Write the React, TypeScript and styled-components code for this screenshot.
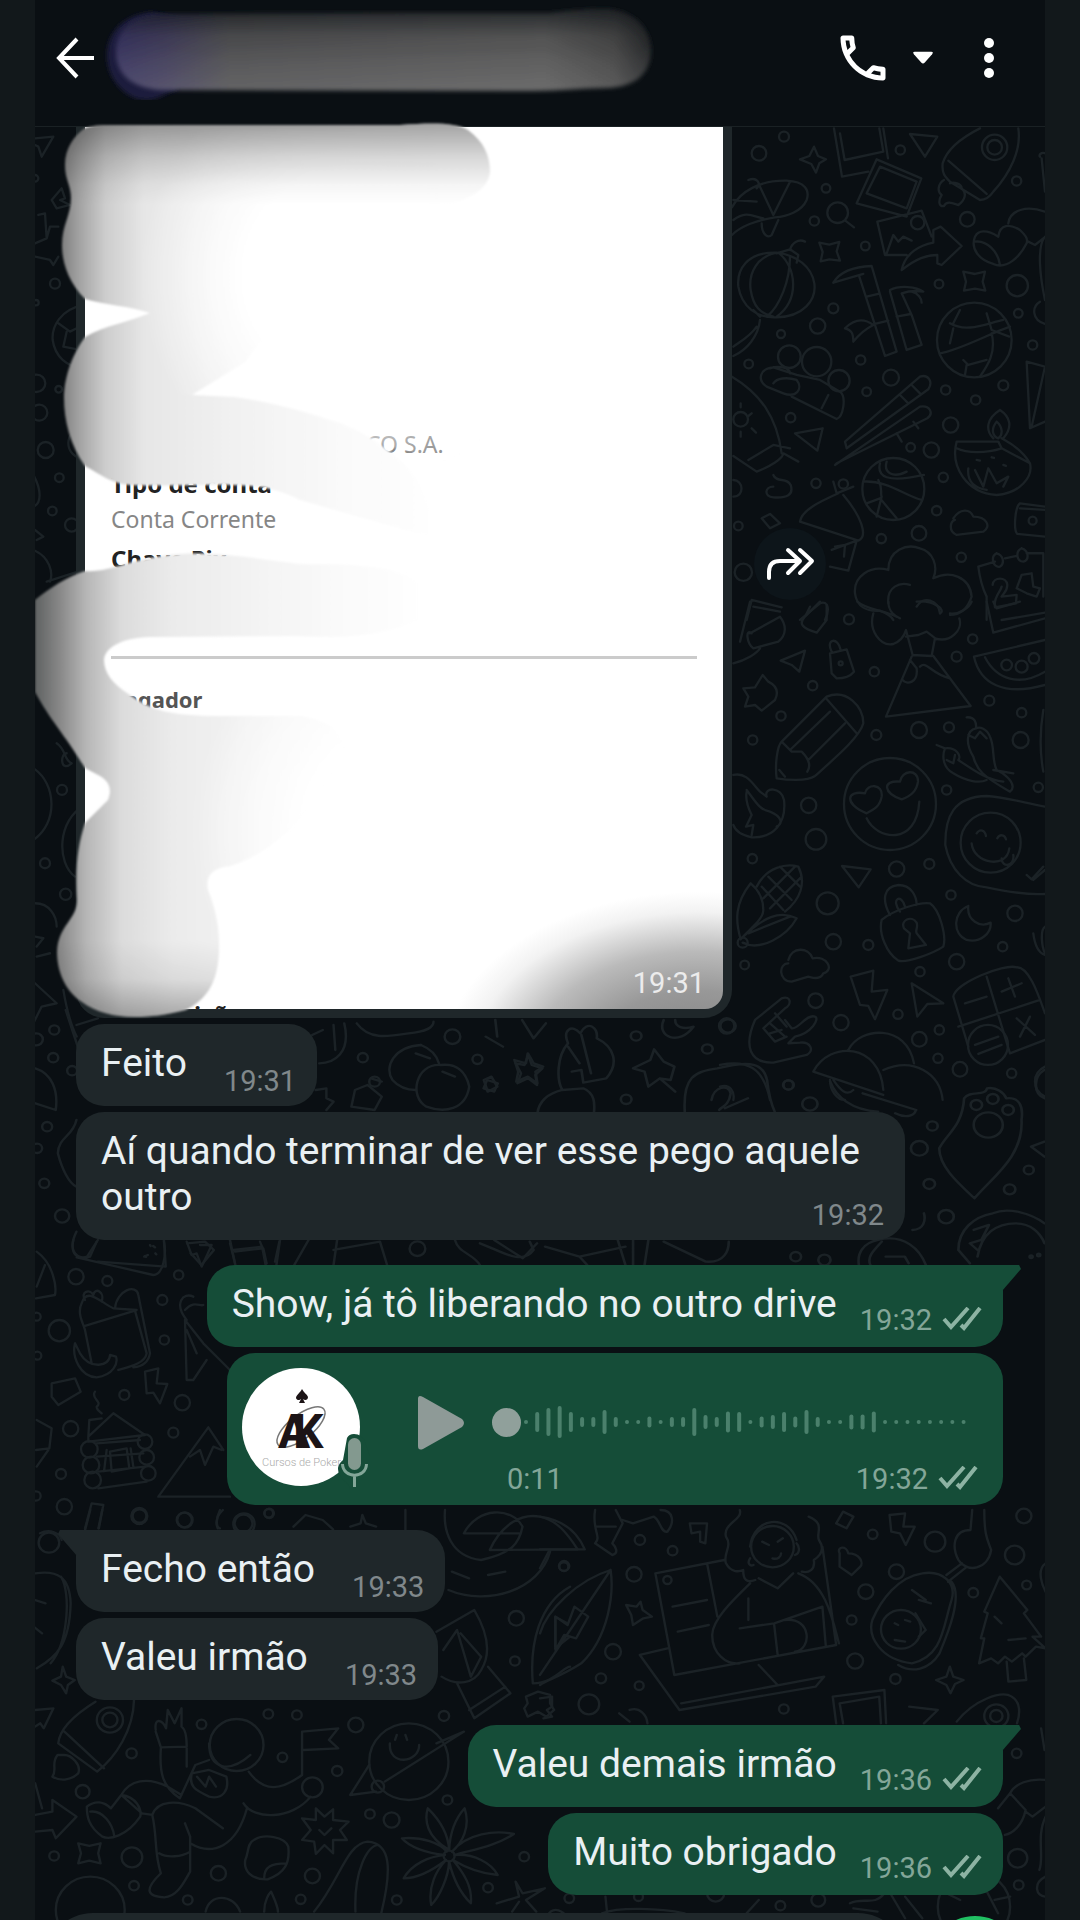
import React from 'react';
import styled, { createGlobalStyle } from 'styled-components';
import { MdOutlineCall } from 'react-icons/md';

const color = {
  frame: '#12181b',
  panel: '#0a0f13',
  incoming: '#1f272a',
  outgoing: '#154d38',
  text: '#e9f0f3',
  meta: '#80888b',
  metaOut: '#83a698',
  tick: '#8db3a3',
  doodle: '#1b2226',
};

const GlobalStyle = createGlobalStyle`
  * { box-sizing: border-box; }
  body { margin: 0; background: ${color.frame}; font-family: Roboto, "Noto Sans", sans-serif; }
  button { border: 0; padding: 0; margin: 0; background: none; color: inherit; cursor: pointer; }
`;

const Page = styled.div`
  height: 100vh;
  overflow: hidden;
  padding: 0 35px;
`;

const Panel = styled.div`
  display: flex;
  flex-direction: column;
  min-height: 100%;
  background: ${color.panel};
`;

const Header = styled.header`
  display: flex;
  align-items: center;
  height: 127px;
  padding: 0 50px 10px 20px;
  border-bottom: 1px solid #1a2124;
  color: #fff;
`;

const IconButton = styled.button<{ $gap?: number }>`
  display: flex;
  align-items: center;
  justify-content: center;
  flex: none;
  margin-left: ${(p) => p.$gap ?? 0}px;
`;

const Contact = styled.button`
  display: flex;
  flex: none;
  margin: 0 auto 0 6px;
  padding-bottom: 12px;
`;

const Chat = styled.main`
  position: relative;
  display: flex;
  flex-direction: column;
  padding: 0 42px 18px 41px;
`;

const Wallpaper = styled.svg`
  position: absolute;
  top: 0;
  left: 0;
  width: 1010px;
  height: 1793px;
  fill: none;
  stroke: ${color.doodle};
`;

const Group = styled.section<{ $mine?: boolean }>`
  position: relative;
  display: flex;
  flex-direction: column;
  align-items: ${(p) => (p.$mine ? 'flex-end' : 'flex-start')};
  gap: 6px;
  margin-bottom: 25px;
  &:last-child { margin-bottom: 0; }
`;

const Bubble = styled.article<{ $mine?: boolean; $tail?: boolean; $stacked?: boolean }>`
  position: relative;
  display: ${(p) => (p.$stacked ? 'block' : 'flex')};
  align-items: flex-end;
  gap: ${(p) => (p.$mine ? 23 : 37)}px;
  max-width: 829px;
  padding: 16px 21px 10px 25px;
  border-radius: 28px;
  ${(p) => p.$tail && (p.$mine ? 'border-top-right-radius: 0;' : 'border-top-left-radius: 0;')}
  background: ${(p) => (p.$mine ? color.outgoing : color.incoming)};
  &::after {
    content: '';
    display: ${(p) => (p.$tail ? 'block' : 'none')};
    position: absolute;
    top: 0;
    ${(p) => (p.$mine ? 'right: -18px;' : 'left: -18px;')}
    width: 19px;
    height: 26px;
    background: inherit;
    clip-path: ${(p) =>
      p.$mine ? 'polygon(0 0, 90% 0, 100% 4px, 0 100%)' : 'polygon(10% 0, 100% 0, 100% 100%, 0 4px)'};
  }
`;

const BubbleText = styled.p<{ $stacked?: boolean }>`
  display: flow-root;
  margin: 0;
  padding-bottom: ${(p) => (p.$stacked ? 0 : 10)}px;
  font-size: 39px;
  line-height: 46px;
  color: ${color.text};
`;

const Meta = styled.span<{ $mine?: boolean; $float?: boolean }>`
  display: flex;
  align-items: center;
  gap: 10px;
  flex: none;
  float: ${(p) => (p.$float ? 'right' : 'none')};
  margin-top: ${(p) => (p.$float ? 26 : 0)}px;
  padding-bottom: ${(p) => (p.$mine ? 2 : 0)}px;
  font-size: 29px;
  line-height: 30px;
  color: ${(p) => (p.$mine ? color.metaOut : color.meta)};
`;

const PhotoRow = styled.div`
  display: flex;
  align-items: center;
  gap: 22px;
`;

const PhotoBubble = styled.article`
  position: relative;
  width: 656px;
  padding: 0 9px 9px;
  border-radius: 0 0 28px 28px;
  background: ${color.incoming};
`;

const Receipt = styled.div`
  display: flex;
  flex-direction: column;
  height: 882px;
  overflow: hidden;
  padding: 302px 26px 0;
  border-radius: 0 0 18px 18px;
  background: radial-gradient(ellipse 255px 170px at 96% 106%, #7e7e7e 0%, #989898 42%, #bababa 65%, #f2f2f2 88%, #fff 100%);
  font-family: "Noto Sans", sans-serif;
  font-size: 23px;
  line-height: 30px;
`;

const Value = styled.span<{ $indent?: number }>`
  margin-left: ${(p) => p.$indent ?? 0}px;
  color: #868686;
`;

const Label = styled.span<{ $soft?: boolean; $top: number; $indent?: number }>`
  margin: ${(p) => p.$top}px 0 5px ${(p) => p.$indent ?? 0}px;
  font-size: ${(p) => (p.$soft ? 22 : 24)}px;
  font-weight: 700;
  color: ${(p) => (p.$soft ? '#555' : '#222')};
`;

const Rule = styled.hr`
  width: 100%;
  margin: 77px 0 0;
  border: 0;
  border-top: 3px solid #cbcbcb;
`;

const Smear = styled.svg`
  position: absolute;
  top: -7px;
  left: -41px;
  width: 600px;
  height: 910px;
  pointer-events: none;
`;

const PhotoTime = styled.time`
  position: absolute;
  right: 27px;
  bottom: 18px;
  font-size: 29px;
  line-height: 34px;
  color: #ececec;
`;

const ForwardButton = styled.button`
  display: flex;
  align-items: center;
  justify-content: center;
  width: 72px;
  height: 72px;
  margin-bottom: 18px;
  border-radius: 50%;
  background: #0d151a;
`;

const VoiceBubble = styled.article`
  display: flex;
  align-items: flex-start;
  width: 776px;
  height: 152px;
  padding: 15px 25px 0 15px;
  border-radius: 28px;
  background: ${color.outgoing};
`;

const PlayButton = styled.button`
  display: flex;
  margin: 26px 26px 0 46px;
`;

const Track = styled.div`
  flex: 1;
  display: flex;
  flex-direction: column;
  padding-top: 36px;
`;

const WaveBox = styled.label`
  display: grid;
  height: 36px;
  & > * { grid-area: 1 / 1; }
`;

const Seek = styled.input`
  appearance: none;
  width: 100%;
  height: 36px;
  margin: 0;
  background: transparent;
  &::-webkit-slider-thumb {
    appearance: none;
    width: 29px;
    height: 29px;
    border-radius: 50%;
    background: #90a09b;
  }
`;

const TrackFoot = styled.div`
  display: flex;
  justify-content: space-between;
  margin-top: 24px;
  padding-left: 15px;
`;

const Composer = styled.footer`
  position: relative;
  display: flex;
  align-items: flex-start;
  gap: 21px;
  padding: 0 22px 0 10px;
`;

const Field = styled.input`
  flex: 1;
  height: 96px;
  border: 0;
  border-radius: 48px;
  background: ${color.incoming};
`;

const RecordButton = styled.button`
  width: 96px;
  height: 96px;
  margin-top: 3px;
  border-radius: 50%;
  background: #21c063;
`;

type Sheet = { at: string; dots: number[][]; lines: string[] };

/* Wallpaper drawings, grouped by the area of the wall they cover. */
const sheets: Sheet[] = [
  {
    at: 'translate(720 120) scale(.3333)',
    dots: [[117,100,22],[192,50,15],[541,90,14],[318,205,13],[283,303,14],[436,378,13],[742,298,22],[890,183,14],[657,492,13],[892,497,32],[895,580,13],[340,565,15],[293,618,23],[183,642,12],[86,732,13],[422,720,14],[513,773,24],[440,815,13],[677,810,14],[767,840,14],[850,796,15],[938,675,14],[212,893,14],[692,915,23],[572,982,13],[634,990,23],[670,1072,14],[288,1090,14],[650,1172,14],[597,1240,22],[484,1256,14],[724,1312,14],[55,1218,13],[70,1357,26],[824,82,38],[824,82,22],[593,308,20],[353,278,31],[208,710,34],[290,725,44],[357,782,32],[763,660,112],[520,1107,93],[62,898,22],[938,1202,12],[370,1092,14]],
    lines: [
      'M240 118L268 108L282 80L294 108L318 118L298 130L288 158L274 132Z',
      'M342 25L366 170L445 155M360 40L374 120L490 95L478 25M490 25L504 115',
      'M470 118L604 175L560 290L410 250ZM480 140L590 185L560 265L440 220Z',
      'M570 42L652 50L615 110Z',
      'M780 25C720 55 680 90 668 130C665 160 675 170 690 185L780 240C800 240 810 230 820 215C870 160 905 90 895 25M685 122L800 222M672 180C655 190 650 215 665 225C655 240 655 262 672 258C680 240 700 250 715 255C735 240 742 220 725 205C725 190 700 185 690 190',
      'M36 262C60 215 120 180 200 182C255 185 270 210 260 240C245 275 200 290 165 292C110 300 60 320 36 345M85 180C110 170 125 190 110 205M120 200L160 285L210 185M125 310C125 345 145 355 155 345L175 300M40 240L110 245M40 300C80 270 100 290 130 295',
      'M376 302L402 322',
      'M472 305L605 272L635 350M472 305L495 405L560 405M500 400L520 345L535 365L550 350L575 362',
      'M545 450C555 400 600 375 640 368L640 330L662 320L725 378L665 435L652 430L652 405C620 405 590 415 545 450Z',
      'M765 350C775 330 800 328 835 350C840 310 870 312 900 330C915 345 925 355 920 370C900 410 860 450 820 432C780 420 750 390 765 350ZM865 310C870 270 920 255 975 275M925 365L945 375L970 355M765 365C800 360 835 395 840 435',
      'M298 368L328 374L358 366L350 394L360 422L328 418L302 424L308 396Z M730 455L765 462L795 455L788 485L796 512L765 506L732 512L738 485Z',
      'M170 398C80 395 50 450 55 500C65 560 110 595 170 592C250 590 290 540 283 490C275 440 230 405 170 398ZM170 398C110 410 85 460 92 510C100 560 120 580 160 590M175 398C230 440 240 540 170 590M210 410C210 480 180 560 140 590M170 400L210 388L235 405L230 428M210 390C215 370 235 355 255 365M100 570L120 590M120 600C115 650 80 690 40 708M110 620C90 650 60 665 40 680',
      'M340 488C360 455 400 440 455 438L530 695L495 708L418 470M340 488L430 462M440 530L475 522M465 612L505 602M510 510C540 495 590 500 610 515C580 510 560 515 545 520L575 585L605 675L560 690L510 515M530 590L572 582M575 515C595 520 605 535 605 548M375 625C410 590 440 600 460 615C440 625 420 640 400 665C400 640 395 630 375 625',
      'M690 610C740 640 800 610 850 600M700 625L690 670M800 580L815 630L868 650M660 700C720 690 810 640 870 620M720 570L700 610M730 720L745 735L800 720M815 640C830 700 800 740 780 770M740 735L735 765',
      'M160 742C120 745 110 780 140 800L190 820C230 835 250 805 230 780C200 770 170 775 160 790M160 742L230 765L300 780L360 815C380 830 370 890 350 897L215 830M325 825L305 865M150 745C180 735 210 745 210 760',
      'M375 965L600 770C625 762 640 785 625 808L380 985ZM345 1035L600 860C630 855 642 880 622 895L350 1030ZM540 825L565 850M575 795L600 820M530 940L545 965M580 905L595 925',
      'M36 770C120 820 170 890 185 1000M40 1008L110 1055C150 1040 190 1015 190 1000L235 1025M85 1020L160 975L210 985M62 850L62 862M20 900L30 902M95 880L85 888M95 925L108 938M62 935L62 950',
      'M225 940L308 925L292 992Z',
      'M840 870C800 895 795 930 820 955M840 870C870 890 880 920 850 955M830 905C810 930 820 950 835 955C850 945 848 920 830 905M710 965C690 1040 740 1120 830 1125C900 1120 940 1070 930 1030C900 980 860 965 845 955M710 965L835 965L845 985C800 1000 740 1000 710 985M845 985L930 1030M745 1045C740 1090 770 1105 800 1110M765 1050L790 1100L805 1045L830 1090L865 1070L850 1100M770 1020L780 1022M815 1012L822 1014M850 1035L858 1038',
      'M430 1085C500 1080 560 1130 605 1140M480 1030C470 1070 500 1090 612 1065M500 1025C490 1060 520 1075 560 1055M440 1150L480 1135L530 1195M485 1130L470 1190M475 1080C490 1110 480 1120 485 1130',
      'M340 1085L350 1120L400 1100M355 1120C300 1145 245 1170 240 1205L415 1262C445 1250 425 1190 370 1125M335 1290L410 1262L385 1352L330 1340M345 1280L375 1275L372 1310',
      'M160 1065C170 1090 200 1070 212 1095C222 1125 200 1135 160 1132C130 1130 135 1100 160 1100M125 1195L150 1182L180 1210L150 1225ZM40 1080C70 1080 75 1130 40 1130',
      'M700 1195C720 1165 750 1165 760 1190C800 1190 815 1220 790 1235L710 1245C685 1235 690 1205 705 1200',
      'M975 740L920 725L930 925L975 905M975 740L935 920M960 545C935 560 935 600 975 612M975 350C950 380 960 470 975 540M960 110C955 105 965 95 975 100M965 115L975 215',
      'M975 1160L900 1150C885 1160 880 1230 892 1242L975 1250M900 1165L975 1170',
      'M505 1350C505 1290 560 1270 600 1285C640 1295 655 1340 640 1375C690 1350 750 1370 755 1430C740 1475 715 1485 690 1485M505 1350C450 1335 400 1370 405 1420C410 1460 440 1475 480 1472C500 1480 515 1490 520 1500M505 1450C500 1400 540 1385 570 1395M590 1460C610 1425 655 1440 660 1480',
      'M775 1340L825 1325M855 1315L890 1308M920 1300L970 1300L970 1430M775 1340C780 1380 790 1410 800 1430L800 1500M830 1300C810 1310 820 1345 840 1340C855 1330 850 1305 830 1300M905 1285C885 1295 890 1325 910 1325C930 1320 925 1290 905 1285M818 1395C820 1370 860 1370 862 1395C862 1415 850 1420 845 1430L890 1425L888 1450L825 1462C820 1430 840 1420 845 1400M890 1405L905 1365L935 1360L940 1400L960 1405L950 1430L920 1420Z',
      'M80 1500L95 1440L185 1462M240 1500L300 1450C325 1440 330 1470 315 1500',
    ],
  },
  {
    at: 'translate(720 600) scale(.3333)',
    dots: [[387,58,15],[463,215,14],[278,257,14],[183,348,14],[98,420,14],[710,170,15],[758,117,14],[808,302,15],[905,338,14],[902,420,24],[597,390,24],[687,382,15],[469,405,15],[266,616,23],[288,718,31],[97,776,14],[510,612,138],[680,570,14],[955,562,14],[812,728,90],[530,807,23],[628,792,15],[693,885,14],[323,910,33],[885,940,23],[340,1025,23],[445,1035,15],[848,1040,14],[710,1085,23],[600,1115,14],[74,1095,13],[287,1202,22],[363,1268,23],[534,1243,14],[598,1318,22],[658,1290,14],[654,1375,14],[720,1408,22],[875,1420,14],[205,1455,14],[20,1278,23],[804,1335,60],[68,1028,15],[362,190,6],[860,195,16],[905,200,18],[942,175,16]],
    lines: [
      'M95 100C75 85 80 130 100 145L175 125C200 105 200 75 180 50L90 100M90 5L60 125M40 190C80 180 110 160 120 145M100 20L180 35',
      'M255 50L300 5M255 50C235 70 245 85 290 98L320 60L320 15M255 50L270 20',
      'M182 182L255 152L238 215L215 195Z',
      'M330 160L380 148L402 215C390 230 370 235 350 235L335 220ZM335 155C315 115 355 110 362 150',
      'M412 5C440 30 490 30 530 50M505 5C505 40 530 50 540 55M460 40C445 90 480 140 520 132C550 120 555 100 558 90L578 165L635 168L645 115C690 130 730 90 718 55M690 40C720 45 750 20 755 5M558 110L595 105L620 95L650 118M575 170L498 350L752 318L640 168M570 180L590 205C595 250 560 255 548 240M600 200C620 180 630 220 690 235M660 40C680 30 640 0 590 5',
      'M800 5L820 98L975 55M845 60L975 38M820 5L830 25L900 5',
      'M762 170L975 120M762 170C780 250 850 290 975 255M795 172C830 240 900 260 975 215',
      'M128 225L145 245C175 260 175 280 165 300L125 332L105 315L75 320L85 290L70 265L105 262Z',
      'M320 290C380 265 430 320 430 370C420 410 350 470 285 528C260 545 200 540 170 535C165 500 170 440 185 425ZM318 295L410 400M330 335L210 450M375 370L265 480M185 425L215 455L245 455C265 475 275 495 262 515M178 510L195 530',
      'M40 525C80 515 100 555 120 575L140 590C130 560 185 560 192 600C200 670 160 715 95 712C60 705 45 690 40 675M80 570C110 610 120 630 150 635C185 650 190 670 170 680M80 575C75 600 85 625 95 645L78 680L100 675L95 705',
      'M440 655C470 720 590 740 598 605M440 640C370 610 380 570 435 580C440 550 490 550 485 590C480 620 460 630 440 640M545 598C490 580 485 540 540 545C545 510 595 505 594 545C590 575 570 590 545 598',
      'M740 352C765 350 770 370 768 385C740 390 735 430 760 470C770 510 790 530 870 575C890 560 870 530 830 510C815 480 825 440 810 410C800 385 780 380 768 385M745 405L765 415L780 395L800 415M650 435L675 445C665 470 670 505 700 520C740 545 780 550 800 540M675 445C710 440 725 470 715 480C760 510 800 540 850 545M680 480L700 490L705 465M820 510L880 520',
      'M975 620C900 605 850 590 800 588C700 590 675 650 676 735C690 810 740 860 800 862C860 875 930 885 975 882M755 730C760 790 860 810 868 745M770 700C780 685 795 690 798 708M832 715C840 700 855 705 858 718M845 775C845 805 885 800 880 765M920 825L935 838L970 800M940 840L975 810M970 330C960 390 960 460 970 515',
      'M366 798L452 808L416 862Z',
      'M92 850C45 910 45 960 62 1018C85 990 130 960 130 930C130 890 110 865 92 850ZM62 1018C130 950 180 930 230 955C200 1010 120 1055 68 1028M85 1000L210 950M110 860C140 800 200 790 235 800C260 850 240 900 195 935M125 860L190 930M145 830L215 900M180 800L240 860M130 895L225 800M150 925L245 830',
      'M510 945C485 900 490 860 535 855C575 855 590 890 590 915M540 935C510 895 545 880 555 920M485 960C520 930 600 905 630 910C660 930 680 1010 670 1040C640 1060 560 1090 535 1082C500 1060 475 1000 485 960ZM552 985C540 960 575 945 590 968C595 985 585 990 590 1000L618 1035L565 1045L570 1000Z',
      'M745 918C700 935 695 1000 740 1020C780 1030 815 1000 812 968C780 985 740 960 745 918Z',
      'M205 1080C215 1040 265 1040 278 1075C320 1065 345 1110 310 1120C300 1145 270 1130 265 1130L215 1145C175 1145 175 1090 205 1090',
      'M392 1130L460 1112L455 1175L502 1170L465 1258L445 1218L420 1215Z M575 1150L670 1210L622 1212L592 1250Z',
      'M105 1260C70 1340 90 1390 160 1388L260 1365C285 1350 270 1325 240 1328L205 1330L225 1310C275 1300 300 1255 285 1250C260 1240 235 1290 215 1285L195 1260M105 1260L185 1195C215 1185 215 1215 195 1225L130 1285M150 1270L195 1310M130 1285L165 1325L200 1310M165 1240L200 1280M150 1300L185 1290',
      'M700 1190C705 1150 850 1090 890 1102C930 1100 960 1200 975 1240M700 1190L745 1340M800 1130L870 1360L975 1320M715 1280L960 1200M735 1210L800 1190M845 1175L905 1150M865 1135L885 1190M890 1255L945 1305M930 1250L900 1310M765 1335L835 1310M775 1362L845 1335',
      'M385 1350C420 1280 560 1270 582 1390M280 1415C330 1320 480 1330 490 1470M280 1415L490 1485M490 1410C580 1370 660 1420 668 1500M330 1440C330 1470 350 1500 375 1500M340 1440C360 1470 380 1490 400 1470',
      'M975 1400C935 1420 935 1470 975 1490M975 980C960 990 965 1040 975 1060M940 1000C945 1040 960 1060 975 1065',
      'M0 1395C80 1380 130 1400 150 1500M0 1460C30 1450 45 1475 40 1500',
    ],
  },
  {
    at: 'translate(480 880) scale(.3827 .3333)',
    dots: [[648,438,20],[408,468,14],[594,507,14],[806,615,14],[862,672,20],[382,658,14],[1182,738,14],[1148,805,22],[1174,912,15],[1218,1010,20],[1434,870,13],[1384,928,15],[1328,735,38],[1297,675,15],[1340,657,15],[1380,690,15],[825,1130,14],[900,1140,16],[1440,1130,4],[1460,1125,4]],
    lines: [
      'M480 420C460 470 520 500 558 440C530 450 510 440 510 420M110 420L140 475L172 430M15 470L60 500M40 420L45 470',
      'M455 508L480 545L508 560L498 600L470 595L440 620L430 575L400 565L445 540ZM470 595L510 635',
      'M90 540L120 550L125 520L140 550L165 560L145 575L150 610L125 590L95 605L100 575Z',
      'M215 630C200 600 200 530 230 490C215 450 240 430 262 460C280 420 310 440 305 475C350 500 365 550 330 595L270 608L265 570L240 575M265 465L290 580M230 500L260 550M215 630L270 625C300 640 300 670 298 695M150 700C155 660 180 640 215 630M10 600L30 590L45 620L20 635Z',
      'M535 695C530 590 560 575 620 565C710 540 740 550 750 600C755 650 760 670 770 695M605 660C610 620 650 610 655 640C650 680 630 680 625 690M640 685L700 655',
      'M915 605C930 650 970 690 1040 695M1000 640L1140 690M1085 700C1120 720 1140 700 1138 690',
      'M1265 655C1280 630 1320 650 1325 625C1350 620 1370 640 1375 655C1410 650 1420 680 1415 720C1420 830 1340 890 1292 955C1250 910 1200 860 1200 805C1220 760 1260 740 1265 655Z',
      'M1475 785L1440 800L1475 830M1475 570C1445 590 1445 640 1475 655',
      'M1250 1110C1250 1050 1290 1010 1340 1000C1380 980 1440 1000 1475 1030M1250 1110L1280 1150M1300 1130C1310 1060 1350 1030 1400 1030C1440 1030 1465 1060 1475 1090M1290 1050L1330 1035L1310 1080L1280 1090L1300 1110M1130 1050C1160 1050 1165 1020 1160 1000',
      'M0 1090C50 1110 110 1160 140 1110L130 1085M170 1100L260 1130L380 1100M260 1130L280 1155M360 1080L380 1155M400 1080L400 1155M440 1080L430 1155M480 1085L590 1145C640 1150 650 1110 650 1085M990 1155C985 1120 1000 1090 1040 1080C1110 1060 1150 1110 1165 1155M1020 1155C1010 1130 1030 1110 1050 1085M1060 1130L1110 1130L1120 1150',
    ],
  },
  {
    at: 'translate(30 1010) scale(.3571 .3333)',
    dots: [[68,60,14],[65,143,14],[18,88,18],[118,182,14],[48,350,14],[40,520,14],[90,618,20],[932,143,14],[1183,80,22],[1253,148,14],[1085,716,22],[965,215,15],[20,415,14]],
    lines: [
      'M880 40C900 130 850 160 810 160M790 75L820 60M850 45L855 120M915 40C950 90 1000 80 1060 70C1110 65 1130 50 1130 35',
      'M1095 105C1020 110 990 170 1015 210C1040 240 1070 240 1080 240M1150 165C1080 160 1060 260 1110 290C1160 310 1220 300 1230 230C1220 180 1190 160 1150 165M1095 105C1130 120 1140 140 1145 160M1080 130L1120 145M1155 185L1190 200',
      'M910 240L945 225L985 260L965 300L900 290ZM955 205L985 215M1280 210L1310 220L1300 245L1270 235Z M800 240L830 235L830 265L850 275L830 300',
      'M1360 160L1385 165L1395 135L1405 165L1435 175L1415 195L1420 225L1395 205L1365 220L1375 190Z',
      'M15 175C60 190 80 240 72 300L15 280M130 330C120 380 80 380 78 430C90 480 110 520 130 530M100 0L140 130M130 45L190 25',
      'M130 665C100 730 140 750 160 740L190 690M190 755L380 770L375 690M320 740L330 735M345 708L350 712M440 700L490 695L515 720L480 765L450 730M560 690L575 765M570 720L650 710L660 765M700 690L690 765M780 690L740 765M850 720L980 695L1000 765M860 690L850 765M1190 690C1200 730 1240 730 1260 765M1300 690L1380 745L1420 700',
    ],
  },
  {
    at: 'translate(30 1220) scale(.3333)',
    dots: [[138,170,23],[232,183,15],[397,240,15],[446,165,14],[88,332,32],[403,360,14],[283,525,15],[457,548,23],[122,626,23],[430,638,15],[93,762,15],[103,860,23],[328,888,24],[465,900,23],[718,880,14],[22,407,12],[18,828,14],[178,688,25],[183,735,25],[188,780,25],[345,665,22],[350,712,22],[355,760,22],[642,912,32],[20,290,12]],
    lines: [
      'M20 95C70 130 80 200 75 225L18 235M20 200L45 135',
      'M130 60C120 110 150 120 180 110L200 65M140 112L370 165C400 165 410 100 402 65M360 75L362 78M345 108L348 111M376 100L379 103',
      'M155 250C140 280 160 310 165 330L185 430M165 318L315 272L350 400C345 430 300 440 265 450M155 250C170 200 210 245 250 265L320 270M255 265C260 210 320 190 325 225L360 400C355 430 330 440 310 442M165 240C150 215 180 205 190 225C195 200 225 215 215 245M135 370C125 410 150 470 200 472C250 465 265 430 258 410L240 405C240 440 180 450 150 400L135 370',
      'M470 300C430 250 460 215 490 230M465 270C490 240 510 260 520 255M465 300L520 370L600 450M465 300L470 480L490 480L530 420M470 330L500 400',
      'M345 455L385 445L380 490L412 492L390 550L370 518L350 520Z',
      'M65 490L135 475L152 515L85 555L65 530Z M195 515C180 535 220 545 200 560C200 570 210 575 215 580',
      'M175 650L250 580L345 645L175 665ZM175 650L178 600L215 595M200 670L330 660M200 710L340 700M205 755L345 740M205 805L350 785M240 695L290 685L298 745L245 755Z M230 690L222 755M302 685L310 740',
      'M385 830L535 622L580 690M385 830L600 830M480 710L510 690L525 735L550 680L575 690M20 600L65 625L58 685L18 690M55 690L20 740',
      'M165 925L185 850L220 855L205 925M570 870C555 900 560 925 570 925M30 940C60 925 90 940 95 960',
      'M470 65L485 105L500 100L515 140L545 75L510 75M600 70L615 130M615 95L700 85L710 130M690 65L700 90M748 65L735 125',
    ],
  },
  {
    at: 'translate(30 1510) scale(.3444 .3333)',
    dots: [[55,98,30],[318,18,20],[448,30,22],[620,40,26],[693,10,13],[1550,170,13],[1412,325,22],[1408,453,14],[1202,618,15],[692,612,14],[775,615,14],[946,645,22],[498,643,14],[232,630,38],[232,630,22],[295,730,15],[733,742,14],[892,783,15],[153,845,20],[296,1042,30],[70,1038,14],[302,1127,14],[547,1090,22],[820,1098,22],[786,1168,14],[458,1170,14],[1065,1170,14],[987,912,14],[1050,930,23],[1212,870,14],[1435,1040,14],[1330,1133,14],[1217,1038,16],[175,1200,100],[600,705,78],[820,832,30],[1100,755,115],[1010,830,18]],
    lines: [
      'M160 60L175 0M200 55L210 0M545 55C535 30 550 10 560 0M765 50L800 15L850 30L880 58M930 50L960 40L965 15L975 40L1005 50M1090 0L1090 60M1205 0C1200 60 1220 140 1310 150C1400 130 1420 100 1430 50',
      'M1260 70L1420 70M1260 70C1300 -10 1400 -10 1430 50M1335 120C1370 40 1430 10 1480 20C1530 30 1560 70 1590 118ZM1215 240C1330 290 1480 240 1510 125M1225 185L1275 205M1330 195L1380 185',
      'M1180 365L1290 300C1330 370 1340 430 1310 480C1290 520 1240 530 1195 500M1200 420L1240 360L1280 500L1310 440L1250 370M1240 520L1290 625L1395 550L1330 470M1275 600L1380 530M1460 520C1450 400 1480 280 1568 230M1460 520C1520 520 1550 470 1568 470M1525 410L1525 320L1560 340M1525 415L1568 380',
      'M1440 560L1475 545L1510 555L1510 580L1522 600L1500 620L1475 605L1445 620L1435 595L1445 580Z',
      'M15 190C80 180 115 200 118 280C115 400 80 440 20 475M90 200C120 250 110 400 60 460M15 270L45 280M10 350L35 370M95 470L105 500L130 510L110 525L105 550L90 525L65 512L90 500Z',
      'M190 575C120 620 85 660 82 700L195 785C250 740 300 660 302 570M100 665L215 775M80 735C60 760 80 780 65 800C90 815 120 810 140 790C150 765 120 735 100 735Z',
      'M15 600L68 595L40 655L30 640L15 650M15 915L65 905L65 870L135 920L75 985L65 960L15 965M15 820L35 895',
      'M365 660C360 620 385 630 395 655L400 600L420 640L440 595L440 650C455 660 455 700 455 710L380 712L365 665M380 715C375 790 385 830 435 865L480 765L520 750M455 715L455 770M635 785C680 850 730 840 790 795L790 665L895 655L868 690L895 715L795 720M520 700C520 780 580 790 640 735M470 790L520 780L570 800C580 840 560 870 520 860C480 840 460 830 470 790Z M485 800L510 830L520 800L540 830',
      'M265 855C290 810 340 800 400 830L440 855M265 855L325 910L355 915M165 890C190 870 215 875 235 895L265 855C310 860 325 900 320 920C280 980 230 990 210 980C170 950 165 920 165 890ZM175 905C210 900 240 940 245 980M355 915C370 870 430 870 480 895L560 955M355 915C370 980 360 1030 380 1090C330 1140 340 1160 390 1162C430 1160 450 1110 465 1085L465 980L450 940M375 1030C400 1045 440 1040 465 1025M465 1000C530 1040 600 1010 630 895M620 880C650 930 760 930 815 860',
      'M985 765L930 855L1005 845M1030 815L1260 665L1180 700M1045 700C1040 770 1130 760 1130 705M1060 690L1065 675M1095 690L1090 675',
      'M790 925L830 930L830 895L855 920L880 898L880 930L925 935L900 960L920 990L880 990L880 1030L855 1005L830 1032L825 995L790 990L815 960Z M840 960L855 975L875 955',
      'M650 990C680 970 740 980 750 1010C755 1060 740 1090 690 1108C640 1110 620 1080 625 1050C635 1030 630 1000 650 990ZM680 1105C680 1070 700 1060 745 1060M140 1000L172 1008L205 1000L198 1030L205 1060L172 1052L140 1060L148 1030Z',
      'M825 1205C900 1110 920 1000 980 995C1050 1000 1050 1080 1020 1210M945 1205C940 1080 980 1010 1010 1005M510 1205C520 1150 590 1150 610 1205M680 1205C680 1170 695 1150 700 1145C715 1180 720 1190 720 1205',
      'M1217 1020C1150 980 1145 930 1155 895C1200 940 1215 980 1217 1020C1220 960 1240 920 1262 895C1280 950 1255 1000 1225 1025C1270 970 1350 960 1405 972C1350 1010 1280 1020 1232 1035C1290 1030 1340 1060 1358 1095C1300 1090 1260 1070 1228 1050C1260 1090 1285 1130 1280 1180C1240 1140 1225 1090 1217 1055C1215 1100 1190 1160 1165 1185C1155 1130 1180 1080 1208 1050C1170 1080 1130 1105 1085 1105C1110 1060 1160 1040 1205 1035C1150 1030 1100 1010 1080 985C1140 980 1190 1000 1210 1025',
      'M1355 1180L1420 1160L1410 1115L1430 1150L1495 1135L1440 1170L1470 1205M1400 1205L1420 1175',
    ],
  },
  {
    at: 'translate(540 1510) scale(.3444 .3333)',
    dots: [[70,168,15],[290,90,15],[385,122,14],[273,193,22],[212,425,23],[177,505,15],[288,527,13],[142,583,30],[708,597,14],[966,73,14],[1147,95,30],[1405,18,22],[1378,135,28],[1035,185,22],[946,245,22],[1413,225,13],[1258,248,14],[905,330,14],[915,453,23],[1032,507,15],[1384,730,14],[1387,1045,28],[1390,1125,14],[85,1165,14],[286,1160,13],[698,1187,14],[808,1170,20],[510,1150,25],[1325,618,35],[1325,618,18],[370,210,12],[675,110,62],[1048,358,58],[1260,1190,105]],
    lines: [
      'M0 20C70 30 110 70 130 118L0 118M25 125L0 175M160 0C150 60 180 80 160 100L210 135C230 130 220 110 210 100L240 40L220 0M160 50L220 50M240 30L270 40L330 20C350 30 350 70 370 65C390 40 390 0 350 0M435 40L485 40L480 100L465 95L465 65L440 70Z',
      'M205 180C215 250 200 380 120 460C60 500 20 510 0 525M205 180C110 210 20 300 0 370M0 495L205 180M45 320L80 345L100 290L140 320L105 385L70 375L45 420Z M250 285L280 290L292 275L298 300L325 320L300 325L270 345L265 315Z',
      'M335 190L535 150M335 190L390 495L860 405L820 110M485 160L515 320M385 290L485 270M400 365L490 345M290 435L370 415M290 435L405 600L800 530L825 500L410 580M635 465L690 525M610 220C560 270 500 330 500 375C500 430 540 465 580 460M580 355L680 340L820 290L830 410M605 265L605 330M680 345L690 435M710 330C790 320 790 420 740 425M750 190C830 220 850 330 868 400',
      'M580 0C590 30 530 40 540 80C560 110 530 130 540 160C555 190 580 185 590 180C590 210 600 220 625 210M780 20C830 40 800 70 810 90C830 120 810 140 795 150C800 180 780 190 760 185M610 145C600 160 610 170 620 165M745 100C755 110 755 130 740 135M635 205L690 235L735 190M645 95L665 105M690 95L705 85M675 145C690 150 700 140 700 130M610 110C620 20 720 10 745 90',
      'M860 40L880 5L910 20L890 55ZM870 130C860 110 890 105 895 130C930 130 940 160 930 170L905 195L870 170ZM1015 15L1060 10L1055 50L1088 50L1062 105L1045 70L1020 65Z',
      'M1255 0L1250 60C1200 60 1195 110 1215 150C1240 190 1300 180 1310 120C1300 90 1290 80 1290 0M1180 195L1225 160M1185 215L1240 170',
      'M1110 190C1170 180 1210 220 1195 270C1170 350 1170 440 1080 460C990 450 950 380 965 330C990 270 1040 200 1110 190ZM1195 215C1230 260 1180 380 1160 430C1130 480 1080 490 1040 465M1080 240L1120 270M1030 340L1040 345M1060 330L1075 335M1030 390L1060 395M1100 270L1135 280M1090 310L1120 360L1100 380',
      'M1335 200L1415 300L1405 310L1455 380L1430 380L1468 415L1440 410L1410 440L1400 430L1370 455L1350 440L1330 460L1310 445L1275 460L1290 385L1280 385L1300 310L1290 305ZM1355 455L1360 515L1412 510L1405 445M1320 320L1340 340M1360 390L1410 385',
      'M1150 510L1180 500L1190 470L1200 500L1230 510L1205 522L1192 550L1180 525Z M850 560L1000 540L1005 640M850 560L860 640M870 580L880 640M870 580L985 560L990 640M1072 590L1155 600L1115 640M1210 635C1260 570 1340 540 1370 560C1395 575 1395 610 1385 640M0 565L35 560L35 590L20 600L35 620L10 625M230 610L260 635M260 600C290 590 310 615 312 640',
      'M1468 810C1420 805 1380 820 1365 850L1330 895M1365 850L1410 900C1400 950 1370 970 1350 975M1410 905L1430 920L1468 890M1468 920C1440 980 1465 1040 1450 1080M1468 1100C1430 1120 1440 1160 1468 1160M1468 160C1440 180 1460 230 1468 245M1455 655L1465 720',
      'M1180 1150L1220 1170M1280 1110L1330 1210M1320 1170L1365 1160M1060 1160L1110 1225M1020 1155L1060 1225M900 1180C940 1160 970 1190 1000 1150M910 1195L980 1205M600 1210L635 1170M190 1160L195 1210M20 1220C40 1180 70 1210 80 1220M180 1210C230 1190 350 1195 420 1210',
    ],
  },
  {
    at: 'translate(30 110) scale(.3333)',
    dots: [[75,521,15],[15,205,10],[20,820,26],[28,908,24],[86,838,10],[47,1020,24],[88,1103,13],[67,1203,13],[125,1245,20],[18,578,8],[96,2040,15],[45,2260,15],[107,2353,17],[160,1000,45]],
    lines: [
      'M15 85L70 80L35 140L25 110L15 105M65 270L95 235L105 265L90 270L120 285L80 295Z M25 315L45 310L50 385M15 400L50 385L60 350L85 350M15 440L60 450L70 465L85 440',
      'M160 585C90 600 65 650 68 690C75 740 110 770 160 775M85 640L120 665L140 655M110 665L100 710L150 720M10 1095C35 1140 35 1180 10 1190M10 1320C60 1340 70 1390 60 1415M15 1260L40 1280L20 1290M50 1415L160 1380',
      'M10 1975C80 2020 85 2140 10 2190M80 1900C110 1920 100 1950 125 1960C90 1990 90 1930 110 1930M165 2085C80 2130 80 2260 135 2300M15 2380C60 2380 80 2420 80 2450M15 2480L40 2485L20 2510M15 2620L80 2680L35 2690L10 2740M60 2530L20 2540M100 2640C110 2700 120 2740 140 2780',
    ],
  },
];

const Doodles = () => (
  <Wallpaper viewBox="35 127 1010 1793" aria-hidden="true">
    {sheets.map((s) => (
      <g key={s.at} transform={s.at} strokeWidth="7" strokeLinejoin="round" strokeLinecap="round">
        {s.dots.map(([x, y, r]) => (
          <circle key={`${x}-${y}-${r}`} cx={x} cy={y} r={r} />
        ))}
        <path d={s.lines.join('')} />
      </g>
    ))}
  </Wallpaper>
);

const Ticks = () => (
  <svg width="40" height="26" viewBox="0 0 40 26" fill="none" stroke={color.tick} strokeWidth="4" role="img" aria-label="Entregue">
    <path d="M2 12L9 20L26 1M19 18L22 21L38 1" />
  </svg>
);

const ContactSmear = () => (
  <svg width="556" height="96" viewBox="100 4 556 96" aria-hidden="true">
    <defs>
      <filter id="soft" x="-5%" y="-20%" width="110%" height="140%"><feGaussianBlur stdDeviation="2" /></filter>
      <linearGradient id="nameX" x1="110" x2="652" y1="0" y2="0" gradientUnits="userSpaceOnUse">
        <stop offset="0" stopColor="#34305c" />
        <stop offset=".1" stopColor="#3f3b58" />
        <stop offset=".22" stopColor="#4d4d4f" />
        <stop offset=".8" stopColor="#565656" />
        <stop offset=".93" stopColor="#434343" />
        <stop offset="1" stopColor="#202224" />
      </linearGradient>
      <linearGradient id="nameY" x1="0" x2="0" y1="12" y2="94" gradientUnits="userSpaceOnUse">
        <stop offset="0" stopColor="#0a0f13" stopOpacity=".6" />
        <stop offset=".3" stopColor="#0a0f13" stopOpacity=".05" />
        <stop offset=".6" stopColor="#fff" stopOpacity=".06" />
        <stop offset="1" stopColor="#fff" stopOpacity=".14" />
      </linearGradient>
    </defs>
    <path d="M150 12C118 16 106 36 106 56C106 82 128 101 146 100C158 100 166 92 176 90L190 20Z" fill="#1d1c3c" filter="url(#soft)" />
    <g filter="url(#soft)">
      <path d="M160 14L550 13C575 10 590 9 602 9C632 9 650 28 650 50C650 74 634 87 606 88C580 88 560 91 530 91L160 90C128 88 115 72 115 52C115 32 128 16 160 14Z" fill="url(#nameX)" />
      <path d="M160 14L550 13C575 10 590 9 602 9C632 9 650 28 650 50C650 74 634 87 606 88C580 88 560 91 530 91L160 90C128 88 115 72 115 52C115 32 128 16 160 14Z" fill="url(#nameY)" />
    </g>
  </svg>
);

const upper =
  'M85 128C95 124 108 125 125 125L400 125C430 123 455 122 468 130C484 142 490 155 490 172C488 190 470 200 430 210L300 290L245 362L192 395L235 397C270 402 300 410 330 420C360 428 375 440 395 456C420 475 430 500 440 540L300 500C285 492 275 490 262 487C220 482 180 487 130 485C112 484 100 474 85 466C70 445 64 420 64 398C64 375 74 352 85 337C105 325 130 322 150 313C130 306 105 305 85 299C68 282 62 262 62 245C62 225 71 215 71 198C71 185 65 180 65 165C65 148 74 136 85 128Z';
const lower =
  'M35 600C50 588 66 577 85 571C110 573 130 558 180 554C220 552 250 558 300 564C350 565 400 562 430 590L420 620C370 640 340 637 290 636L150 637C120 638 105 648 104 660C104 672 112 684 130 695C150 710 170 716 220 716L300 716C340 722 350 745 340 760C310 810 280 850 230 866C212 868 205 876 208 890C214 905 220 925 219 950C218 985 205 1000 186 1010C165 1015 150 1017 135 1017C115 1017 95 1012 82 1002C64 990 57 970 57 952C58 925 77 920 77 900C75 865 78 845 85 823L108 800C112 790 110 782 100 776L85 768C65 735 50 720 35 692Z';

const PhotoSmear = () => (
  <Smear viewBox="35 120 600 910" aria-hidden="true">
    <defs>
      <filter id="edge" x="-10%" y="-5%" width="120%" height="110%"><feGaussianBlur stdDeviation="1" /></filter>
      <linearGradient id="upX" x1="60" x2="440" y1="0" y2="0" gradientUnits="userSpaceOnUse">
        <stop offset="0" stopColor="#7c7c7c" />
        <stop offset=".05" stopColor="#a2a2a2" />
        <stop offset=".12" stopColor="#cdcdcd" />
        <stop offset=".22" stopColor="#e6e6e6" />
        <stop offset=".45" stopColor="#f1f1f1" />
        <stop offset=".75" stopColor="#fafafa" />
        <stop offset="1" stopColor="#fff" />
      </linearGradient>
      <linearGradient id="upY" x1="0" x2="0" y1="124" y2="205" gradientUnits="userSpaceOnUse">
        <stop offset="0" stopColor="#000" stopOpacity=".36" />
        <stop offset=".4" stopColor="#000" stopOpacity=".16" />
        <stop offset=".75" stopColor="#000" stopOpacity=".04" />
        <stop offset="1" stopColor="#000" stopOpacity="0" />
      </linearGradient>
      <radialGradient id="glow" cx="350" cy="275" r="210" gradientUnits="userSpaceOnUse">
        <stop offset="0" stopColor="#fff" />
        <stop offset=".5" stopColor="#fff" />
        <stop offset="1" stopColor="#fff" stopOpacity="0" />
      </radialGradient>
      <linearGradient id="lowX" x1="35" x2="430" y1="0" y2="0" gradientUnits="userSpaceOnUse">
        <stop offset="0" stopColor="#5f6262" />
        <stop offset=".06" stopColor="#868686" />
        <stop offset=".13" stopColor="#b6b6b6" />
        <stop offset=".22" stopColor="#dcdcdc" />
        <stop offset=".35" stopColor="#ebebeb" />
        <stop offset=".55" stopColor="#f3f3f3" />
        <stop offset=".8" stopColor="#fbfbfb" />
        <stop offset="1" stopColor="#fff" />
      </linearGradient>
      <linearGradient id="lowY" x1="0" x2="0" y1="940" y2="1018" gradientUnits="userSpaceOnUse">
        <stop offset="0" stopColor="#000" stopOpacity="0" />
        <stop offset=".5" stopColor="#000" stopOpacity=".07" />
        <stop offset="1" stopColor="#000" stopOpacity=".3" />
      </linearGradient>
      <radialGradient id="fade" cx="400" cy="830" r="210" gradientUnits="userSpaceOnUse">
        <stop offset="0" stopColor="#fff" />
        <stop offset=".45" stopColor="#fff" />
        <stop offset="1" stopColor="#fff" stopOpacity="0" />
      </radialGradient>
      <clipPath id="lowClip"><path d={lower} /></clipPath>
    </defs>
    <g filter="url(#edge)">
      <path d={upper} fill="url(#upX)" />
      <path d="M100 130H490V470L385 446L330 418L235 395H192L100 395Z" fill="url(#glow)" />
      <path d={upper} fill="url(#upY)" />
      <path d={lower} fill="url(#lowX)" />
      <path d="M180 600H560V1010H180Z" fill="url(#fade)" clipPath="url(#lowClip)" />
      <path d={lower} fill="url(#lowY)" />
    </g>
  </Smear>
);

const levels = [4, 20, 28, 32, 20, 10, 10, 24, 10, 4, 4, 11, 4, 10, 10, 28, 14, 10, 21, 20, 4, 11, 14, 20, 11, 24, 10, 4, 4, 15, 15, 21, 4, 4, 4, 4, 4, 4, 4, 4];

const Waveform = () => (
  <svg width="100%" height="36" viewBox="0 0 486 36" preserveAspectRatio="xMinYMid meet" stroke="#4b806c" strokeWidth="4" strokeLinecap="round" aria-hidden="true">
    {levels.map((h, i) => (
      <path key={i} d={`M${34 + i * 11.22} ${20 - h / 2}V${16 + h / 2}`} />
    ))}
  </svg>
);

const Avatar = () => (
  <svg width="128" height="122" viewBox="242 1368 128 122" role="img" aria-label="Mensagem de voz">
    <circle cx="301" cy="1427" r="59" fill="#fff" />
    <ellipse cx="301" cy="1427" rx="29" ry="12" transform="rotate(-38 301 1427)" fill="none" stroke="#777" strokeWidth="1.5" />
    <path d="M302 1389C300 1393 296 1395 296 1398C297 1401 300 1400 301 1399L299 1403H305L303 1399C305 1401 308 1400 308 1397C307 1394 304 1393 302 1389Z" fill="#1c1416" />
    <g fontFamily="Roboto, sans-serif" fontWeight="700" fontSize="48" fill="#1c1416">
      <text x="278" y="1448">A</text>
      <text x="293" y="1448">K</text>
    </g>
    <text x="262" y="1466" fontFamily='Roboto, sans-serif' fontWeight="300" fontSize="11" fill="#aaa">Cursos de Poker</text>
    <path d="M347 1438Q349 1434 354 1434Q362 1434 365 1442L372 1462V1490H350Q350 1486 346 1482Q338 1476 338 1469Q338 1464 343 1460Z" fill={color.outgoing} />
    <rect x="348" y="1438" width="13" height="32" rx="6.5" fill="#83998f" />
    <path d="M342.5 1464C343 1479 366 1479 366.5 1464M354.5 1475V1487" fill="none" stroke="#83a698" strokeWidth="3" />
  </svg>
);

type TextProps = { text: string; time: string; mine?: boolean; tail?: boolean; stacked?: boolean };

const TextMessage = ({ text, time, mine, tail, stacked }: TextProps) => {
  const meta = (
    <Meta $mine={mine} $float={stacked}>
      <time>{time}</time>
      {mine && <Ticks />}
    </Meta>
  );
  return (
    <Bubble $mine={mine} $tail={tail} $stacked={stacked}>
      <BubbleText $stacked={stacked}>
        {text}
        {stacked && meta}
      </BubbleText>
      {!stacked && meta}
    </Bubble>
  );
};

export default function App() {
  return (
    <Page>
      <GlobalStyle />
      <Panel>
        <Header>
          <IconButton aria-label="Voltar">
            <svg width="40" height="44" viewBox="0 0 40 44" fill="none" stroke="#fff" strokeWidth="4">
              <path d="M22 3L4 22L22 41M4 22H39" />
            </svg>
          </IconButton>
          <Contact aria-label="Dados do contato"><ContactSmear /></Contact>
          <IconButton aria-label="Ligar"><MdOutlineCall size={60} /></IconButton>
          <IconButton aria-label="Opções de ligação" $gap={20}>
            <svg width="20" height="14" viewBox="0 0 22 14" fill="#fff"><path d="M2 0H20Q23 0 21 3L13 12Q11 14 9 12L1 3Q-1 0 2 0Z" /></svg>
          </IconButton>
          <IconButton aria-label="Mais opções" $gap={50}>
            <svg width="12" height="42" viewBox="0 0 12 42" fill="#fff">
              <circle cx="6" cy="6" r="5" /><circle cx="6" cy="21" r="5" /><circle cx="6" cy="36" r="5" />
            </svg>
          </IconButton>
        </Header>

        <Chat>
          <Doodles />
          <Group>
            <PhotoRow>
              <PhotoBubble>
                <Receipt>
                  <Value $indent={255}>CO S.A.</Value>
                  <Label $top={10}>Tipo de conta</Label>
                  <Value>Conta Corrente</Value>
                  <Label $top={10}>Chave Pix</Label>
                  <Rule />
                  <Label $top={25} $soft>Pagador</Label>
                  <Label $top={281} $indent={83}>ição</Label>
                </Receipt>
                <PhotoSmear />
                <PhotoTime>19:31</PhotoTime>
              </PhotoBubble>
              <ForwardButton aria-label="Encaminhar">
                <svg width="50" height="36" viewBox="0 0 50 36" fill="none" stroke="#fff" strokeWidth="4" strokeLinecap="round" strokeLinejoin="round">
                  <path d="M4 32V26Q4 15 15 15H34M23 4L35 15L23 27M35 4L47 15L35 27" />
                </svg>
              </ForwardButton>
            </PhotoRow>
            <TextMessage text="Feito" time="19:31" />
            <TextMessage text="Aí quando terminar de ver esse pego aquele outro" time="19:32" stacked />
          </Group>

          <Group $mine>
            <TextMessage text="Show, já tô liberando no outro drive" time="19:32" mine tail />
            <VoiceBubble>
              <Avatar />
              <PlayButton aria-label="Reproduzir">
                <svg width="50" height="58" viewBox="0 0 50 58" fill="#8e9a97"><path d="M2 5Q2 0 7 3L46 25Q50 29 46 33L7 55Q2 57 2 52Z" /></svg>
              </PlayButton>
              <Track>
                <WaveBox>
                  <Waveform />
                  <Seek type="range" min={0} max={11} defaultValue={0} aria-label="Posição do áudio" />
                </WaveBox>
                <TrackFoot>
                  <Meta $mine>0:11</Meta>
                  <Meta $mine><time>19:32</time><Ticks /></Meta>
                </TrackFoot>
              </Track>
            </VoiceBubble>
          </Group>

          <Group>
            <TextMessage text="Fecho então" time="19:33" tail />
            <TextMessage text="Valeu irmão" time="19:33" />
          </Group>

          <Group $mine>
            <TextMessage text="Valeu demais irmão" time="19:36" mine tail />
            <TextMessage text="Muito obrigado" time="19:36" mine />
          </Group>
        </Chat>

        <Composer>
          <Field aria-label="Mensagem" />
          <RecordButton aria-label="Gravar áudio" />
        </Composer>
      </Panel>
    </Page>
  );
}
